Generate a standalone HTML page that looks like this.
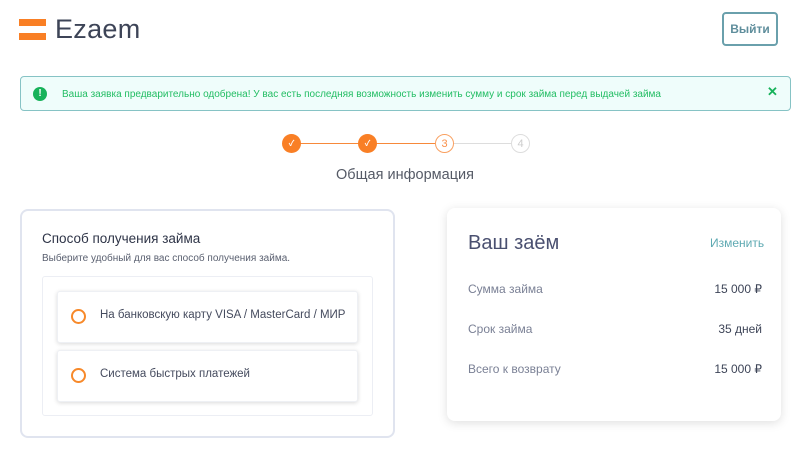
<!DOCTYPE html>
<html><head><meta charset="utf-8"><style>
*{margin:0;padding:0;box-sizing:border-box}
body{width:800px;height:451px;background:#fff;font-family:"Liberation Sans","Noto Sans CJK SC",sans-serif;position:relative;overflow:hidden;color:#3d4457}
.a{position:absolute;white-space:nowrap}
.bar{position:absolute;left:19px;width:27px;height:7px;background:#f97f25}
.circ{position:absolute;width:19px;height:19px;border-radius:50%;top:134px;display:flex;align-items:center;justify-content:center;font-size:8px}
.opt{position:absolute;left:57px;width:301px;height:52px;background:#fff;border-radius:3px;box-shadow:0 1px 4px rgba(0,0,0,.15);border:1px solid #eef0f4}
.opt .r{position:absolute;left:13px;top:17px;width:15px;height:15px;border:2px solid #f7892a;border-radius:50%}
.opt span{position:absolute;left:42px;top:17px;font-size:11.5px;color:#454b5e;white-space:nowrap}
.row{position:absolute;left:468px;width:294px;font-size:12px}
.row .l{color:#7a8095}.row .v{position:absolute;right:0;top:0;color:#3d4457}
</style></head><body>
<div class="bar" style="top:19px"></div><div class="bar" style="top:33px"></div>
<div class="a" style="left:55px;top:14px;font-size:27px;color:#3d4457;letter-spacing:.3px">Ezaem</div>
<div class="a" style="left:722px;top:12px;width:56px;height:34px;border:2px solid #6aa0ac;border-radius:4px;font-size:12px;font-weight:bold;color:#5f8e9c;text-align:center;line-height:30px">Выйти</div>
<div class="a" style="left:20px;top:76px;width:771px;height:35px;background:#effdfb;border:1px solid #86c3c5;border-radius:4px"></div>
<div class="a" style="left:33px;top:87px;width:14px;height:14px;border-radius:50%;background:#17b25a;color:#fff;font-size:10px;font-weight:bold;text-align:center;line-height:14px">!</div>
<div class="a" style="left:62px;top:89px;font-size:10px;color:#22bd63">Ваша заявка предварительно одобрена! У вас есть последняя возможность изменить сумму и срок займа перед выдачей займа</div>
<div class="a" style="left:767px;top:84px;font-size:13px;font-weight:bold;color:#17b25a">✕</div>
<div class="a" style="left:300px;top:143px;width:135px;height:1px;background:#f7893a"></div>
<div class="a" style="left:453px;top:143px;width:58px;height:1px;background:#ddd"></div>
<div class="circ" style="left:282px;background:#f97f25;color:#fff;font-weight:bold">✓</div>
<div class="circ" style="left:358px;background:#f97f25;color:#fff;font-weight:bold">✓</div>
<div class="circ" style="left:435px;background:#fff;border:1px solid #f9a060;color:#f9904a;font-size:11px">3</div>
<div class="circ" style="left:511px;background:#fff;border:1px solid #ddd;color:#ccc;font-size:11px">4</div>
<div class="a" style="left:0;width:810px;top:167px;text-align:center;font-size:14.5px;color:#555a66">Общая информация</div>
<div class="a" style="left:20px;top:209px;width:375px;height:229px;border:2px solid #e0e4ef;border-radius:8px"></div>
<div class="a" style="left:42px;top:231px;font-size:13.5px;color:#2e3447">Способ получения займа</div>
<div class="a" style="left:42px;top:253px;font-size:10px;color:#5a6070">Выберите удобный для вас способ получения займа.</div>
<div class="a" style="left:42px;top:276px;width:331px;height:140px;border:1px solid #eceef4;border-radius:3px"></div>
<div class="opt" style="top:291px"><div class="r"></div><span>На банковскую карту VISA / MasterCard / МИР</span></div>
<div class="opt" style="top:350px"><div class="r"></div><span>Система быстрых платежей</span></div>
<div class="a" style="left:447px;top:208px;width:334px;height:213px;border-radius:8px;box-shadow:0 2px 10px rgba(0,0,0,.13)"></div>
<div class="a" style="left:468px;top:232px;font-size:20px;color:#4a5070;font-weight:300">Ваш заём</div>
<div class="a" style="left:710px;top:236px;font-size:12px;color:#5ea9b2">Изменить</div>
<div class="row" style="top:282px"><span class="l">Сумма займа</span><span class="v">15 000 ₽</span></div>
<div class="row" style="top:322px"><span class="l">Срок займа</span><span class="v">35 дней</span></div>
<div class="row" style="top:362px"><span class="l">Всего к возврату</span><span class="v">15 000 ₽</span></div>
</body></html>
